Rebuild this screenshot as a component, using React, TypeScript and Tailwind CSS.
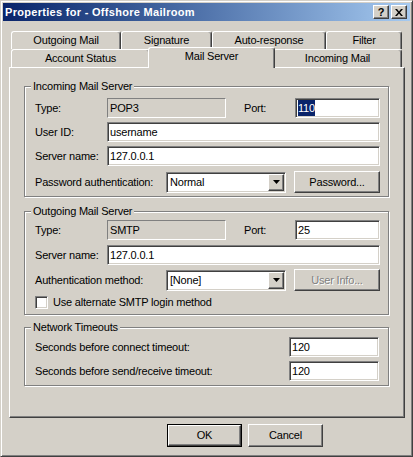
import React from 'react';

const sunken =
  'border border-t-[#808080] border-l-[#808080] border-b-white border-r-white shadow-[inset_1px_1px_0_#404040,inset_-1px_-1px_0_#d4d0c8]';
const raised =
  'border border-t-white border-l-white border-b-[#404040] border-r-[#404040] shadow-[inset_-1px_-1px_0_#808080]';
const etched = 'border border-[#808080] shadow-[inset_1px_1px_0_#fff,1px_1px_0_#fff]';
const tabBase =
  'flex items-center justify-center bg-[#d4d0c8] border-t border-l border-r border-t-white border-l-white border-r-[#404040] shadow-[inset_-1px_0_0_#808080] rounded-t-[3px]';

function Field({ children, className = '' }: { children?: React.ReactNode; className?: string }) {
  return (
    <div className={`${sunken} h-[20px] bg-white flex items-center pl-[2px] overflow-hidden whitespace-nowrap ${className}`}>
      {children}
    </div>
  );
}

function ReadOnly({ children }: { children: React.ReactNode }) {
  return (
    <div className="w-[119px] h-[20px] flex items-center pl-[2px] border border-t-[#808080] border-l-[#808080] border-b-white border-r-white">
      {children}
    </div>
  );
}

function Combo({ value }: { value: string }) {
  return (
    <div className={`${sunken} w-[120px] h-[21px] bg-white flex items-stretch p-[1px]`}>
      <div className="flex-1 flex items-center pl-[2px]">{value}</div>
      <div className={`${raised} w-[16px] bg-[#d4d0c8] flex items-center justify-center`}>
        <svg width="7" height="4" viewBox="0 0 7 4">
          <polygon points="0,0 7,0 3.5,4" fill="#000" />
        </svg>
      </div>
    </div>
  );
}

function Button({ children, w, disabled, isDefault }: { children: React.ReactNode; w: string; disabled?: boolean; isDefault?: boolean }) {
  const label = (
    <span className={disabled ? 'text-[#808080] [text-shadow:1px_1px_0_#fff]' : ''}>{children}</span>
  );
  if (isDefault) {
    return (
      <div className={`${w} h-[23px] border border-black flex`}>
        <div className={`${raised} flex-1 flex items-center justify-center`}>{label}</div>
      </div>
    );
  }
  return <div className={`${raised} ${w} flex items-center justify-center`}>{label}</div>;
}

function Legend({ children }: { children: React.ReactNode }) {
  return (
    <div className="-mt-[7px] -ml-[4px] flex">
      <span className="bg-[#d4d0c8] px-[2px] h-[13px] leading-[13px]">{children}</span>
    </div>
  );
}

export default function App() {
  return (
    <div className="w-[413px] h-[457px] bg-[#d4d0c8] border border-t-[#d4d0c8] border-l-[#d4d0c8] border-r-[#404040] border-b-[#404040] shadow-[inset_1px_1px_0_#fff,inset_-1px_-1px_0_#808080] p-[2px] flex flex-col text-[11px] text-black tracking-[-0.2px] font-['Liberation_Sans',Arial,sans-serif]">
      {/* Title bar */}
      <div className="h-[18px] flex items-center bg-linear-to-r from-[#0a246a] to-[#a6caf0] pl-[2px] pr-[3px]">
        <span className="flex-1 font-bold text-white tracking-[0.3px]">Properties for - Offshore Mailroom</span>
        <div className={`${raised} w-[16px] h-[14px] bg-[#d4d0c8] flex items-center justify-center font-bold text-[11px] leading-none`}>
          ?
        </div>
        <div className={`${raised} ml-[2px] w-[16px] h-[14px] bg-[#d4d0c8] flex items-center justify-center`}>
          <svg width="8" height="7" viewBox="0 0 8 7">
            <path d="M0 0h2l2 2.4L6 0h2L5 3.5 8 7H6L4 4.6 2 7H0l3-3.5z" fill="#000" />
          </svg>
        </div>
      </div>

      {/* Tabs */}
      <div className="mt-[10px] ml-[8px] flex h-[18px]">
        <div className={`${tabBase} w-[110px] h-[18px]`}>Outgoing Mail</div>
        <div className={`${tabBase} w-[91px] h-[18px]`}>Signature</div>
        <div className={`${tabBase} w-[114px] h-[18px]`}>Auto-response</div>
        <div className={`${tabBase} w-[76px] h-[18px]`}>Filter</div>
      </div>
      <div className="ml-[8px] flex items-end h-[18px]">
        <div className={`${tabBase} w-[139px] h-[18px]`}>Account Status</div>
        <div className={`${tabBase} relative z-10 -mx-[2px] -mb-[1px] w-[127px] h-[21px] pb-[3px]`}>Mail Server</div>
        <div className={`${tabBase} w-[129px] h-[18px]`}>Incoming Mail</div>
      </div>

      {/* Panel */}
      <div className="ml-[6px] w-[396px] h-[351px] border border-t-white border-l-white border-r-[#404040] border-b-[#404040] shadow-[inset_-1px_-1px_0_#808080] pl-[14px] pr-[15px] flex flex-col">
        {/* Incoming */}
        <div className={`${etched} mt-[18px] pl-[10px] pr-[8px] pb-[3px]`}>
          <Legend>Incoming Mail Server</Legend>
          <div className="mt-[5px] flex items-center h-[20px]">
            <span className="w-[72px]">Type:</span>
            <ReadOnly>POP3</ReadOnly>
            <span className="ml-[18px] w-[51px]">Port:</span>
            <Field className="w-[85px]">
              <span className="bg-[#0a246a] text-white">110</span>
            </Field>
          </div>
          <div className="mt-[4px] flex items-center h-[20px]">
            <span className="w-[72px]">User ID:</span>
            <Field className="flex-1">username</Field>
          </div>
          <div className="mt-[4px] flex items-center h-[20px]">
            <span className="w-[72px]">Server name:</span>
            <Field className="flex-1">127.0.0.1</Field>
          </div>
          <div className="mt-[5px] flex items-center h-[22px]">
            <span className="w-[131px]">Password authentication:</span>
            <Combo value="Normal" />
            <div className="ml-[8px] h-[22px] flex">
              <Button w="w-[86px]">Password...</Button>
            </div>
          </div>
        </div>

        {/* Outgoing */}
        <div className={`${etched} mt-[14px] pl-[10px] pr-[8px] pb-[5px]`}>
          <Legend>Outgoing Mail Server</Legend>
          <div className="mt-[2px] flex items-center h-[20px]">
            <span className="w-[72px]">Type:</span>
            <ReadOnly>SMTP</ReadOnly>
            <span className="ml-[18px] w-[51px]">Port:</span>
            <Field className="w-[85px]">25</Field>
          </div>
          <div className="mt-[5px] flex items-center h-[20px]">
            <span className="w-[72px]">Server name:</span>
            <Field className="flex-1">127.0.0.1</Field>
          </div>
          <div className="mt-[4px] flex items-center h-[22px]">
            <span className="w-[131px]">Authentication method:</span>
            <Combo value="[None]" />
            <div className="ml-[8px] h-[22px] flex">
              <Button w="w-[86px]" disabled>
                User Info...
              </Button>
            </div>
          </div>
          <div className="mt-[5px] flex items-center h-[13px]">
            <div className={`${sunken} w-[13px] h-[13px] bg-white`} />
            <span className="ml-[5px]">Use alternate SMTP login method</span>
          </div>
        </div>

        {/* Timeouts */}
        <div className={`${etched} mt-[12px] pl-[10px] pr-[9px] pb-[4px]`}>
          <Legend>Network Timeouts</Legend>
          <div className="mt-[3px] flex items-center h-[20px]">
            <span className="flex-1">Seconds before connect timeout:</span>
            <Field className="w-[90px]">120</Field>
          </div>
          <div className="mt-[4px] flex items-center h-[20px]">
            <span className="flex-1">Seconds before send/receive timeout:</span>
            <Field className="w-[90px]">120</Field>
          </div>
        </div>
      </div>

      {/* Dialog buttons */}
      <div className="mt-[6px] flex justify-end pr-[87px] gap-[6px] h-[23px]">
        <Button w="w-[75px]" isDefault>
          OK
        </Button>
        <Button w="w-[75px]">Cancel</Button>
      </div>
    </div>
  );
}
